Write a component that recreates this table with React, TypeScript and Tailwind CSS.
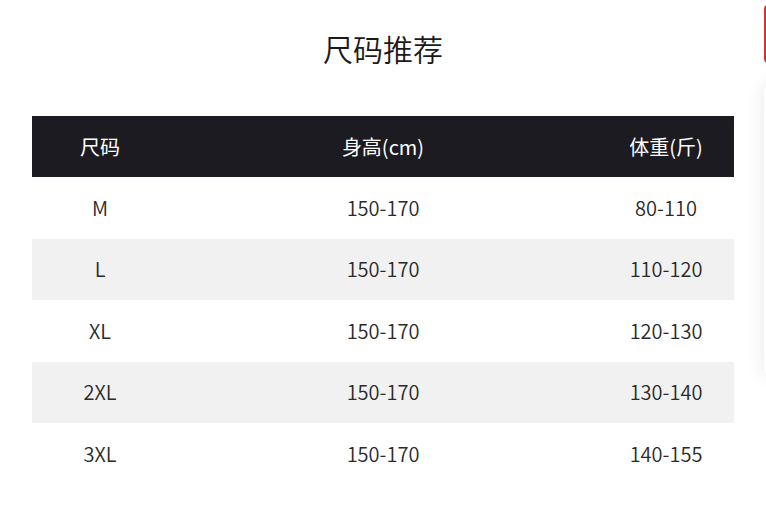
import React from "react";

const rows = [
  ["M", "150-170", "80-110"],
  ["L", "150-170", "110-120"],
  ["XL", "150-170", "120-130"],
  ["2XL", "150-170", "130-140"],
  ["3XL", "150-170", "140-155"],
];

export default function App() {
  return (
    <div
      className="relative w-[766px] h-[510px] overflow-hidden bg-white text-[#2a2a2a]"
      style={{ fontFamily: '"Noto Sans CJK SC", "Noto Sans", sans-serif' }}
    >
      <div className="h-[96px] flex items-center justify-center text-[30px] leading-none font-[350] text-[#1a1a1a]">
        尺码推荐
      </div>
      <div className="mt-[20px] mx-[32px] w-[702px]">
        <div className="grid grid-cols-[136px_1fr_136px] h-[61px] items-center bg-[#1c1b22] text-white text-[20px]">
          <div className="text-center">尺码</div>
          <div className="text-center">身高(cm)</div>
          <div className="text-center">体重(斤)</div>
        </div>
        {rows.map((r, i) => (
          <div
            key={r[0]}
            className={`grid grid-cols-[136px_1fr_136px] h-[61.5px] items-center text-[20px] font-[350] ${
              i % 2 === 1 ? "bg-[#f1f1f1]" : "bg-white"
            }`}
          >
            <div className="text-center">{r[0]}</div>
            <div className="text-center">{r[1]}</div>
            <div className="text-center">{r[2]}</div>
          </div>
        ))}
      </div>
      <div className="absolute left-[764px] top-[5px] w-[40px] h-[58px] rounded-l-[4px] bg-[#d8322c]" />
      <div className="absolute left-[764px] top-[85px] w-[60px] h-[290px] rounded-l-[6px] bg-white shadow-[0_0_20px_rgba(0,0,0,0.09)]" />
    </div>
  );
}
